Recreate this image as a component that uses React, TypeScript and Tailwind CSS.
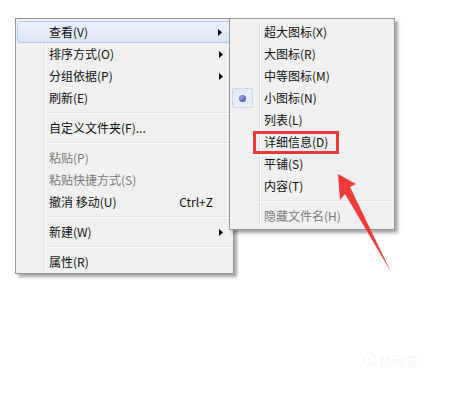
import React from 'react';

type Item =
  | { type: 'sep' }
  | { type: 'item'; label: string; sub?: boolean; shortcut?: string; disabled?: boolean; active?: boolean; radio?: boolean };

const mainItems: Item[] = [
  { type: 'item', label: '查看(V)', sub: true, active: true },
  { type: 'item', label: '排序方式(O)', sub: true },
  { type: 'item', label: '分组依据(P)', sub: true },
  { type: 'item', label: '刷新(E)' },
  { type: 'sep' },
  { type: 'item', label: '自定义文件夹(F)...' },
  { type: 'sep' },
  { type: 'item', label: '粘贴(P)', disabled: true },
  { type: 'item', label: '粘贴快捷方式(S)', disabled: true },
  { type: 'item', label: '撤消 移动(U)', shortcut: 'Ctrl+Z' },
  { type: 'sep' },
  { type: 'item', label: '新建(W)', sub: true },
  { type: 'sep' },
  { type: 'item', label: '属性(R)' },
];

const viewItems: Item[] = [
  { type: 'item', label: '超大图标(X)' },
  { type: 'item', label: '大图标(R)' },
  { type: 'item', label: '中等图标(M)' },
  { type: 'item', label: '小图标(N)', radio: true },
  { type: 'item', label: '列表(L)' },
  { type: 'item', label: '详细信息(D)' },
  { type: 'item', label: '平铺(S)' },
  { type: 'item', label: '内容(T)' },
  { type: 'sep' },
  { type: 'item', label: '隐藏文件名(H)', disabled: true },
];

const SubArrow = () => (
  <svg width="4" height="7" viewBox="0 0 4 7" className="shrink-0">
    <path d="M0 0 L4 3.5 L0 7 Z" fill="#000" />
  </svg>
);

const App: React.FC = () => {
  return (
    <div
      className="relative w-[462px] h-[408px] bg-white overflow-hidden text-[12px] leading-none"
      style={{ fontFamily: '"Noto Sans CJK SC", "Noto Sans", sans-serif' }}
    >
      {/* main context menu */}
      <div className="absolute left-[15px] top-[18px] w-[219px] border border-[#979797] bg-[#f0f0f0] px-[1px] pt-[2px] shadow-[3px_3px_3px_rgba(0,0,0,0.35)]">
        <div className="absolute left-[28px] top-[2px] bottom-0 w-[2px] border-l border-[#e2e3e3]">
          <div className="h-full w-px bg-white" />
        </div>
        {mainItems.map((it, i) =>
          it.type === 'sep' ? (
            <div key={i} className="relative h-[8px] pl-[29px] flex flex-col justify-center">
              <div className="h-px bg-[#e0e0e0]" />
              <div className="h-px bg-white" />
            </div>
          ) : (
            <div
              key={i}
              className={
                'relative flex items-center h-[22px] pl-[32px] pr-[9px] ' +
                (it.active ? 'rounded-[3px] border border-[#aecbec] bg-gradient-to-b from-[#eaf1fb] to-[#dae6f6]' : '')
              }
            >
              <span className={(it.disabled ? 'text-[#7b7b7b]' : 'text-[#111]') + (it.active ? ' -ml-px' : '')}>{it.label}</span>
              <span className="ml-auto flex items-center">
                {it.shortcut && <span className="mr-[6px] text-[#111]">{it.shortcut}</span>}
                {it.sub ? <SubArrow /> : <span className="w-[4px]" />}
              </span>
            </div>
          )
        )}
      </div>

      {/* view submenu */}
      <div className="absolute left-[229px] top-[18px] w-[166px] border border-[#979797] bg-[#f0f0f0] px-[1px] pt-[2px] pb-[2px] shadow-[3px_3px_3px_rgba(0,0,0,0.35)]">
        <div className="absolute left-[29px] top-[2px] bottom-[2px] w-[2px] border-l border-[#e2e3e3]">
          <div className="h-full w-px bg-white" />
        </div>
        {viewItems.map((it, i) =>
          it.type === 'sep' ? (
            <div key={i} className="h-[8px] pl-[30px] flex flex-col justify-center">
              <div className="h-px bg-[#e0e0e0]" />
              <div className="h-px bg-white" />
            </div>
          ) : (
            <div key={i} className="relative flex items-center h-[22px] pl-[33px]">
              {it.radio && (
                <div className="absolute left-[1px] top-[1px] w-[21px] h-[20px] rounded-[2px] border border-[#c6d8ef] bg-[#e4edf8] flex items-center justify-center">
                  <div className="w-[7px] h-[7px] rounded-full bg-[radial-gradient(circle_at_35%_35%,#9aa3e6,#3c3f9c)]" />
                </div>
              )}
              <span className={it.disabled ? 'text-[#7b7b7b]' : 'text-[#111]'}>{it.label}</span>
            </div>
          )
        )}
      </div>

      {/* red highlight box */}
      <div className="absolute left-[253px] top-[131px] w-[86px] h-[23px] border-[3px] border-[#e8383c]" />

      {/* red arrow */}
      <svg className="absolute left-0 top-0" width="462" height="408" viewBox="0 0 462 408">
        <polygon points="338,174 356,184 350,187 391,272 345,194 340,200" fill="#ef3b3b" />
      </svg>

      {/* faint watermark */}
      <div className="absolute left-[363px] top-[353px] flex items-center gap-[2px] text-[#f8f8f8]">
        <span className="w-[14px] h-[14px] rounded-full border-2 border-[#f7f7f7] text-[9px] font-bold flex items-center justify-center">S</span>
        <span className="text-[13px] font-bold">快问答</span>
      </div>
    </div>
  );
};

export default App;
